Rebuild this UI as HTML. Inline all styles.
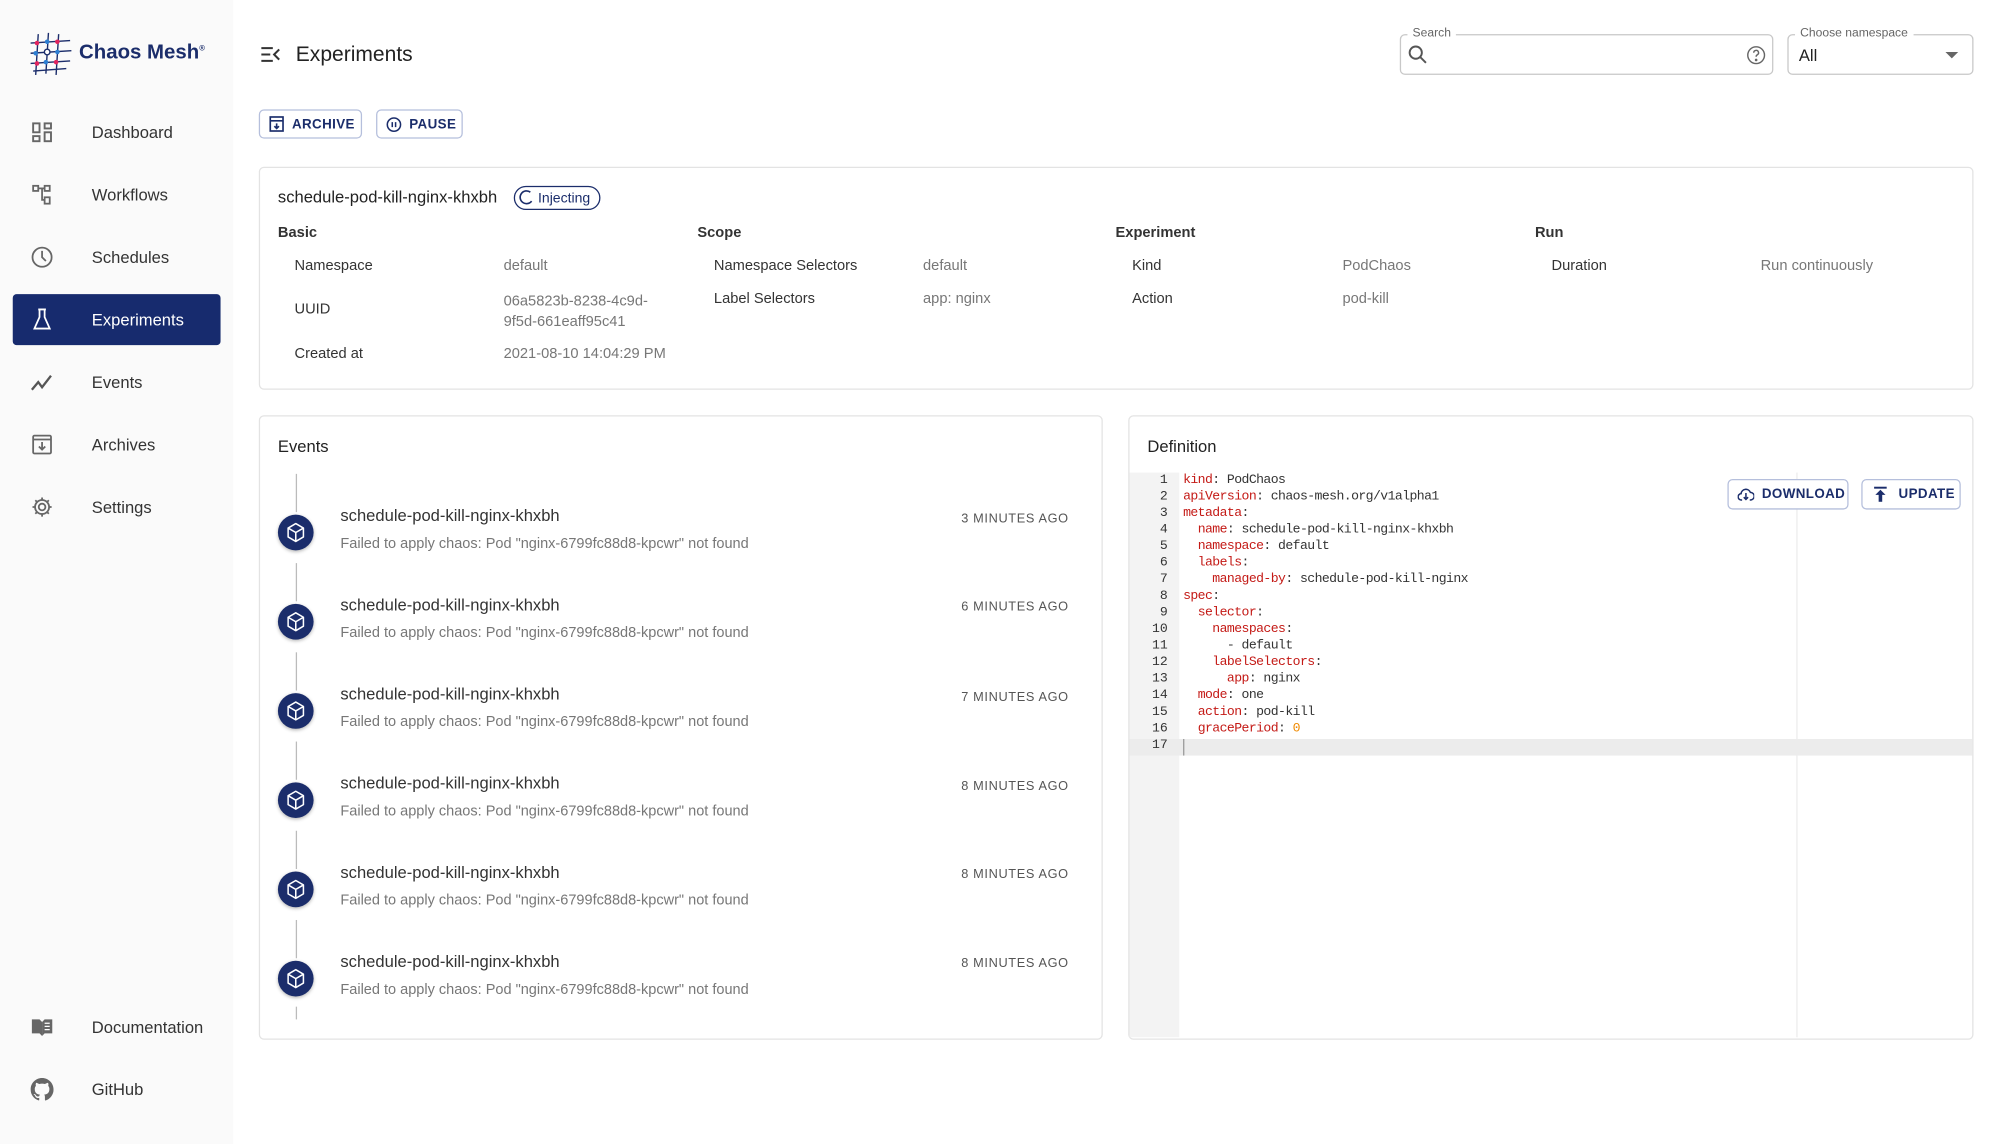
<!DOCTYPE html>
<html><head><meta charset="utf-8">
<style>
*{box-sizing:border-box;margin:0;padding:0}
html,body{width:1999px;height:1142px;overflow:hidden;background:#fff;font-family:"Liberation Sans",sans-serif;color:#222}
#w{position:absolute;left:0;top:1px;width:1568px;height:896px;transform:scale(1.27487,1.2746);transform-origin:0 0}
.a{position:absolute;white-space:nowrap}
#side{position:absolute;left:0;top:-1px;width:183px;height:898px;background:#fafafa}
.nav{position:absolute;left:72px;font-size:13px;color:#333;transform:translateY(-50%)}
.ic{position:absolute;left:24px;width:18px;height:18px;transform:translateY(-50%)}
.card{position:absolute;border:1px solid #e3e3e3;border-radius:4px;background:#fff}
.btn{position:absolute;border:1px solid #b5bfdc;border-radius:4px;color:#1b2d6b;font-size:10.5px;font-weight:bold;display:flex;align-items:center;gap:6px;padding-left:7px;letter-spacing:.3px}
.lb{font-size:11.5px;color:#333}
.vl{font-size:11.5px;color:#777}
.hd{font-size:11.5px;color:#333;font-weight:bold}
.et{font-size:13px;color:#333}
.em{font-size:11.4px;color:#777}
.tm{font-size:10px;color:#555;letter-spacing:.5px}
.dot{position:absolute;left:218px;width:28px;height:28px;border-radius:50%;background:#1b2d6b;box-shadow:0 1px 3px rgba(0,0,0,.3)}
.vline{position:absolute;left:231.5px;width:1px;background:#bbb}
.code{position:absolute;left:928px;font-family:"Liberation Mono",monospace;font-size:10.3px;letter-spacing:-.45px;line-height:13px;color:#333}
.k{color:#c41a16}
.ln{position:absolute;left:886px;width:30px;text-align:right;font-family:"Liberation Mono",monospace;font-size:10.3px;line-height:13px;color:#333}
</style></head><body><div id="w">
<div id="side">
 <svg class="a" style="left:22px;top:25px" width="36" height="36" viewBox="0 0 36 36" fill="none" stroke="#1b2d6b" stroke-width="1.1">
  <path d="M8 2 L6 34 M16 1 L14 33 M24 2 L22 34 M2 9 L33 7 M2 17 L34 15 M2 25 L33 23 M4 31 L30 29"/>
  <circle cx="7" cy="9" r="1.8" fill="#e0245e" stroke="none"/><circle cx="15" cy="8" r="1.8" fill="#2d7fd3" stroke="none"/><circle cx="23" cy="8" r="1.8" fill="#e0245e" stroke="none"/>
  <circle cx="6" cy="17" r="1.8" fill="#2d7fd3" stroke="none"/><circle cx="15" cy="16" r="2.2" fill="#fff"/><circle cx="23" cy="16" r="1.8" fill="#2d7fd3" stroke="none"/>
  <circle cx="7" cy="25" r="1.8" fill="#e0245e" stroke="none"/><circle cx="14" cy="24" r="1.8" fill="#2d7fd3" stroke="none"/><circle cx="22" cy="24" r="1.8" fill="#e0245e" stroke="none"/>
 </svg>
 <div class="a" style="left:62px;top:33px;font-size:16px;font-weight:bold;color:#1b2d6b">Chaos Mesh<sup style="font-size:6px">®</sup></div>
 <svg class="ic" style="top:104px" viewBox="0 0 18 18" fill="none" stroke="#666" stroke-width="1.5"><rect x="2" y="2" width="5" height="7"/><rect x="11" y="2" width="5" height="4"/><rect x="2" y="12" width="5" height="4"/><rect x="11" y="9" width="5" height="7"/></svg>
 <div class="nav" style="top:104px">Dashboard</div>
 <svg class="ic" style="top:153px" viewBox="0 0 18 18" fill="none" stroke="#666" stroke-width="1.4"><rect x="2" y="2" width="4" height="4"/><rect x="11" y="2" width="4" height="4"/><rect x="11" y="11" width="4" height="5"/><path d="M6 4h5M9 4v9h2"/></svg>
 <div class="nav" style="top:153px">Workflows</div>
 <svg class="ic" style="top:202px" viewBox="0 0 18 18" fill="none" stroke="#666" stroke-width="1.4"><circle cx="9" cy="9" r="7.5"/><path d="M9 4v5l3 3"/></svg>
 <div class="nav" style="top:202px">Schedules</div>
 <div class="a" style="left:10px;top:231px;width:163px;height:40px;background:#172b6e;border-radius:3px"></div>
 <svg class="ic" style="top:251px" viewBox="0 0 18 18" fill="none" stroke="#fff" stroke-width="1.4"><path d="M6 1h6M7 1v6L3 16h12L11 7V1"/></svg>
 <div class="nav" style="top:251px;color:#fff">Experiments</div>
 <svg class="ic" style="top:300px" viewBox="0 0 18 18" fill="none" stroke="#555" stroke-width="1.8"><path d="M1 15l5-6 3 4 7-9"/></svg>
 <div class="nav" style="top:300px">Events</div>
 <svg class="ic" style="top:349px" viewBox="0 0 18 18" fill="none" stroke="#666" stroke-width="1.4"><rect x="2" y="2" width="14" height="14" rx="1"/><path d="M2 5h14M9 7v6M6.5 10.5L9 13l2.5-2.5"/></svg>
 <div class="nav" style="top:349px">Archives</div>
 <svg class="ic" style="top:398px" viewBox="0 0 18 18" fill="none" stroke="#666" stroke-width="1.4"><circle cx="9" cy="9" r="2.6"/><path d="M9 1.5v2.5M9 14v2.5M1.5 9h2.5M14 9h2.5M3.7 3.7l1.8 1.8M12.5 12.5l1.8 1.8M3.7 14.3l1.8-1.8M12.5 5.5l1.8-1.8"/><circle cx="9" cy="9" r="5.5"/></svg>
 <div class="nav" style="top:398px">Settings</div>
 <svg class="ic" style="top:806px" viewBox="0 0 18 18"><path d="M1 3h6l2 2v11L7 14H1z" fill="#666"/><path d="M9 5l2-2h6v11h-6l-2 2z" fill="#666"/><path d="M11 6h4M11 8.5h4M11 11h4" stroke="#fff" stroke-width="1"/></svg>
 <div class="nav" style="top:806px">Documentation</div>
 <svg class="ic" style="top:855px" viewBox="0 0 16 16"><path fill="#666" d="M8 0C3.58 0 0 3.58 0 8c0 3.54 2.290 6.53 5.47 7.59.4.07.55-.17.55-.38v-1.34c-2.23.48-2.7-1.070-2.7-1.07-.36-.92-.89-1.170-.89-1.17-.73-.5.06-.49.06-.49.8.06 1.23.83 1.23.83.72 1.23 1.87.87 2.33.67.07-.52.28-.87.5-1.07-1.78-.2-3.65-.89-3.65-3.95 0-.87.31-1.59.82-2.15-.08-.2-.36-1.02.08-2.12 0 0 .67-.21 2.2.82a7.6 7.6 0 0 1 4 0c1.53-1.04 2.2-.82 2.2-.82.44 1.1.16 1.92.08 2.12.51.56.82 1.27.82 2.15 0 3.07-1.87 3.75-3.65 3.95.29.25.54.73.54 1.48v2.2c0 .21.15.46.55.38A8.01 8.01 0 0 0 16 8c0-4.42-3.58-8-8-8z"/></svg>
 <div class="nav" style="top:855px">GitHub</div>
</div>

<svg class="a" style="left:204px;top:35px" width="16" height="14" viewBox="0 0 16 14" fill="none" stroke="#333" stroke-width="1.6"><path d="M1 2h9M1 7h7M1 12h9M15 3l-4 4 4 4"/></svg>
<div class="a" style="left:232px;top:33px;font-size:16.5px;color:#222">Experiments</div>

<div class="a" style="left:1098px;top:26px;width:293px;height:32px;border:1px solid #c8c8c8;border-radius:4px"></div>
<div class="a" style="left:1104px;top:20px;background:#fff;padding:0 4px;font-size:9.5px;color:#666">Search</div>
<svg class="a" style="left:1104px;top:34px" width="16" height="16" viewBox="0 0 16 16" fill="none" stroke="#555" stroke-width="1.5"><circle cx="6.5" cy="6.5" r="4.8"/><path d="M10 10l4.5 4.5"/></svg>
<svg class="a" style="left:1370px;top:35px" width="15" height="15" viewBox="0 0 16 16" fill="none" stroke="#666" stroke-width="1.2"><circle cx="8" cy="8" r="7"/><path d="M6 6a2 2 0 1 1 3 1.7c-.8.4-1 .9-1 1.6"/><circle cx="8" cy="12" r=".5" fill="#666"/></svg>
<div class="a" style="left:1402px;top:26px;width:146px;height:32px;border:1px solid #c8c8c8;border-radius:4px"></div>
<div class="a" style="left:1408px;top:20px;background:#fff;padding:0 4px;font-size:9.5px;color:#666">Choose namespace</div>
<div class="a" style="left:1411px;top:35px;font-size:13px;color:#222">All</div>
<div class="a" style="left:1526px;top:40px;width:0;height:0;border-left:5px solid transparent;border-right:5px solid transparent;border-top:5px solid #666"></div>

<div class="btn" style="left:203px;top:85px;width:81px;height:23px"><svg width="12" height="13" viewBox="0 0 12 13" fill="none" stroke="#1b2d6b" stroke-width="1.3"><rect x="1" y="1" width="10" height="11"/><path d="M1 4h10M6 6v4M4.2 8.2L6 10l1.8-1.8"/></svg>ARCHIVE</div>
<div class="btn" style="left:295px;top:85px;width:68px;height:23px"><svg width="12" height="12" viewBox="0 0 12 12" fill="none" stroke="#1b2d6b" stroke-width="1.2"><circle cx="6" cy="6" r="5.2"/><path d="M4.7 4v4M7.3 4v4"/></svg>PAUSE</div>

<div class="card" style="left:203px;top:130px;width:1345px;height:175px"></div>
<div class="a" style="left:218px;top:146px;font-size:13px;color:#222">schedule-pod-kill-nginx-khxbh</div>
<div class="a" style="left:403px;top:145px;width:68px;height:19px;border:1px solid #1b2d6b;border-radius:10px;font-size:11px;color:#1b2d6b;padding:3px 0 0 18px">Injecting</div>
<svg class="a" style="left:407px;top:148px" width="12" height="12" viewBox="0 0 12 12" fill="none" stroke="#1b2d6b" stroke-width="1.3"><path d="M9 2A5 5 0 1 0 10 9"/></svg>

<div class="a hd" style="left:218px;top:176px">Basic</div>
<div class="a hd" style="left:547px;top:176px">Scope</div>
<div class="a hd" style="left:875px;top:176px">Experiment</div>
<div class="a hd" style="left:1204px;top:176px">Run</div>
<div class="a lb" style="left:231px;top:202px">Namespace</div><div class="a vl" style="left:395px;top:202px">default</div>
<div class="a lb" style="left:231px;top:236px">UUID</div><div class="a vl" style="left:395px;top:228px;line-height:16px">06a5823b-8238-4c9d-<br>9f5d-661eaff95c41</div>
<div class="a lb" style="left:231px;top:271px">Created at</div><div class="a vl" style="left:395px;top:271px">2021-08-10 14:04:29 PM</div>
<div class="a lb" style="left:560px;top:202px">Namespace Selectors</div><div class="a vl" style="left:724px;top:202px">default</div>
<div class="a lb" style="left:560px;top:228px">Label Selectors</div><div class="a vl" style="left:724px;top:228px">app: nginx</div>
<div class="a lb" style="left:888px;top:202px">Kind</div><div class="a vl" style="left:1053px;top:202px">PodChaos</div>
<div class="a lb" style="left:888px;top:228px">Action</div><div class="a vl" style="left:1053px;top:228px">pod-kill</div>
<div class="a lb" style="left:1217px;top:202px">Duration</div><div class="a vl" style="left:1381px;top:202px">Run continuously</div>

<div class="card" style="left:203px;top:325px;width:662px;height:490px"></div>
<div class="a" style="left:218px;top:342px;font-size:13px;color:#222">Events</div>
<div class="vline" style="top:371px;height:30px"></div>
<div class="vline" style="top:441px;height:30px"></div>
<div class="vline" style="top:511px;height:30px"></div>
<div class="vline" style="top:581px;height:30px"></div>
<div class="vline" style="top:651px;height:30px"></div>
<div class="vline" style="top:721px;height:30px"></div>
<div class="vline" style="top:789px;height:10px"></div>

<div class="card" style="left:885px;top:325px;width:663px;height:490px"></div>
<div class="a" style="left:900px;top:342px;font-size:13px;color:#222">Definition</div>
<div class="a" style="left:886px;top:370px;width:39px;height:443px;background:#f3f3f3"></div>
<div class="a" style="left:1409px;top:370px;width:1px;height:443px;background:#ececec"></div>
<div class="a" style="left:886px;top:579px;width:661px;height:13px;background:#ececec"></div>
<div class="a" style="left:928px;top:579px;width:1px;height:13px;background:#999"></div>
<div class="ln" style="top:370px">1<br>2<br>3<br>4<br>5<br>6<br>7<br>8<br>9<br>10<br>11<br>12<br>13<br>14<br>15<br>16<br>17</div>
<div class="code" style="top:370px"><span class="k">kind</span>: PodChaos<br><span class="k">apiVersion</span>: chaos-mesh.org/v1alpha1<br><span class="k">metadata</span>:<br>&nbsp;&nbsp;<span class="k">name</span>: schedule-pod-kill-nginx-khxbh<br>&nbsp;&nbsp;<span class="k">namespace</span>: default<br>&nbsp;&nbsp;<span class="k">labels</span>:<br>&nbsp;&nbsp;&nbsp;&nbsp;<span class="k">managed-by</span>: schedule-pod-kill-nginx<br><span class="k">spec</span>:<br>&nbsp;&nbsp;<span class="k">selector</span>:<br>&nbsp;&nbsp;&nbsp;&nbsp;<span class="k">namespaces</span>:<br>&nbsp;&nbsp;&nbsp;&nbsp;&nbsp;&nbsp;- default<br>&nbsp;&nbsp;&nbsp;&nbsp;<span class="k">labelSelectors</span>:<br>&nbsp;&nbsp;&nbsp;&nbsp;&nbsp;&nbsp;<span class="k">app</span>: nginx<br>&nbsp;&nbsp;<span class="k">mode</span>: one<br>&nbsp;&nbsp;<span class="k">action</span>: pod-kill<br>&nbsp;&nbsp;<span class="k">gracePeriod</span>: <span style="color:#f08a00">0</span></div>
<div class="btn" style="left:1355px;top:375px;width:95px;height:24px;background:#fff"><svg width="13" height="12" viewBox="0 0 13 12" fill="none" stroke="#1b2d6b" stroke-width="1.2"><path d="M3.5 10.5H3a2.5 2.5 0 0 1-.3-5A3.8 3.8 0 0 1 10 4.5a2.8 2.8 0 0 1 0 6h-.5M6.5 5v5M4.8 8.3l1.7 1.7 1.7-1.7"/></svg>DOWNLOAD</div>
<div class="btn" style="left:1460px;top:375px;width:78px;height:24px;background:#fff;padding-left:9px"><svg width="10" height="12" viewBox="0 0 10 12" fill="#1b2d6b"><rect x="0" y="0" width="10" height="1.6"/><path d="M5 2.5L1 6.5h2.6V12h2.8V6.5H9z"/></svg>&nbsp;UPDATE</div>

<div class="a et" style="left:267px;top:396px">schedule-pod-kill-nginx-khxbh</div>
<div class="a em" style="left:267px;top:420px">Failed to apply chaos: Pod "nginx-6799fc88d8-kpcwr" not found</div>
<div class="a tm" style="left:754px;top:401px">3 MINUTES AGO</div>
<div class="a et" style="left:267px;top:466px">schedule-pod-kill-nginx-khxbh</div>
<div class="a em" style="left:267px;top:490px">Failed to apply chaos: Pod "nginx-6799fc88d8-kpcwr" not found</div>
<div class="a tm" style="left:754px;top:470px">6 MINUTES AGO</div>
<div class="a et" style="left:267px;top:536px">schedule-pod-kill-nginx-khxbh</div>
<div class="a em" style="left:267px;top:560px">Failed to apply chaos: Pod "nginx-6799fc88d8-kpcwr" not found</div>
<div class="a tm" style="left:754px;top:541px">7 MINUTES AGO</div>
<div class="a et" style="left:267px;top:606px">schedule-pod-kill-nginx-khxbh</div>
<div class="a em" style="left:267px;top:630px">Failed to apply chaos: Pod "nginx-6799fc88d8-kpcwr" not found</div>
<div class="a tm" style="left:754px;top:611px">8 MINUTES AGO</div>
<div class="a et" style="left:267px;top:676px">schedule-pod-kill-nginx-khxbh</div>
<div class="a em" style="left:267px;top:700px">Failed to apply chaos: Pod "nginx-6799fc88d8-kpcwr" not found</div>
<div class="a tm" style="left:754px;top:680px">8 MINUTES AGO</div>
<div class="a et" style="left:267px;top:746px">schedule-pod-kill-nginx-khxbh</div>
<div class="a em" style="left:267px;top:770px">Failed to apply chaos: Pod "nginx-6799fc88d8-kpcwr" not found</div>
<div class="a tm" style="left:754px;top:750px">8 MINUTES AGO</div>

<div class="dot" style="top:403px"></div><div class="dot" style="top:473px"></div><div class="dot" style="top:543px"></div>
<div class="dot" style="top:613px"></div><div class="dot" style="top:683px"></div><div class="dot" style="top:753px"></div>
<svg class="a" style="left:218px;top:403px" width="28" height="378" viewBox="0 0 28 378" fill="none" stroke="#fff" stroke-width="1.2" stroke-linejoin="round">
 <g id="cb"><path d="M14 7l6 3.5v7L14 21l-6-3.5v-7z M8 10.5L14 14l6-3.5 M14 14v7"/></g>
 <use href="#cb" y="70"/><use href="#cb" y="140"/><use href="#cb" y="210"/><use href="#cb" y="280"/><use href="#cb" y="350"/>
</svg>
</div></body></html>
